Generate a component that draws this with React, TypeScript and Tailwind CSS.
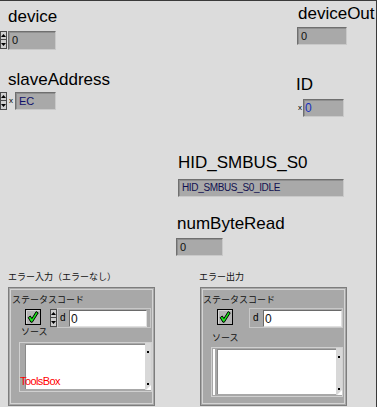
import React from "react";

const LABEL =
  "font-['Liberation_Sans',Arial,sans-serif] text-[17px] leading-[17px] text-black whitespace-nowrap";
const JP =
  "font-['Noto_Sans_CJK_JP','Noto_Sans_CJK_SC',sans-serif] text-[9px] leading-[9px] text-[#111] whitespace-nowrap";
const BOX =
  "h-[18px] bg-[#a9a9a9] border border-t-[#6f6f6f] border-l-[#6f6f6f] border-b-[#c9c9c9] border-r-[#c9c9c9] shadow-[inset_1px_1px_0_#8f8f8f] flex items-center pl-[3px] font-['Liberation_Sans',Arial,sans-serif] text-[11px] leading-none text-[#111] whitespace-nowrap overflow-hidden";

function Spin() {
  return (
    <div className="flex flex-col w-[7px] h-[18px] shrink-0">
      <div className="h-[9px] bg-[#cfcfcf] border border-[#4a4a4a] flex items-center justify-center">
        <svg width="5" height="3" viewBox="0 0 5 3">
          <path d="M2.5 0L5 3H0z" fill="#000" />
        </svg>
      </div>
      <div className="h-[9px] bg-[#cfcfcf] border border-t-0 border-[#4a4a4a] flex items-center justify-center">
        <svg width="5" height="3" viewBox="0 0 5 3">
          <path d="M0 0H5L2.5 3z" fill="#000" />
        </svg>
      </div>
    </div>
  );
}

function Radix() {
  return (
    <div className="flex items-center justify-center font-['Liberation_Sans',Arial,sans-serif] text-[8px] leading-none text-black">
      x
    </div>
  );
}

function Check() {
  return (
    <svg width="16" height="16" viewBox="0 0 16 16" className="shrink-0">
      <rect x="0.5" y="0.5" width="15" height="15" fill="#b5b5b5" stroke="#000" />
      <path d="M1.5 14.5V1.5H14.5" fill="none" stroke="#d6d6d6" />
      <path
        d="M3.2 8.6 L5.3 7 L6.9 9.6 L11.2 2.6 L13.2 3.9 L7.3 13.2 L5.9 13.2 Z"
        fill="#19e619"
        stroke="#000"
        strokeWidth="1"
        strokeLinejoin="round"
      />
    </svg>
  );
}

function Scroll() {
  return (
    <div className="w-[6px] h-full bg-[#d8d8d8] relative flex flex-col items-center">
      <div className="mt-[8px] w-[2px] h-[2px] bg-black" />
      <div className="mt-auto mb-[5px] w-[2px] h-[2px] bg-black" />
      <div className="absolute right-0 bottom-0 w-0 h-0 border-l-[5px] border-l-transparent border-b-[5px] border-b-white" />
    </div>
  );
}

function WhiteNum({ w }: { w: string }) {
  return (
    <div
      className={
        "h-[17px] bg-white border border-t-[#6a6a6a] border-l-[#6a6a6a] border-b-[#e0e0e0] border-r-[#e0e0e0] flex items-center pl-[1px] font-['Liberation_Sans',Arial,sans-serif] text-[12px] leading-none text-[#111] " +
        w
      }
    >
      0
    </div>
  );
}

function ClusterFrame({ children }: { children: React.ReactNode }) {
  return (
    <div className="w-[147px] h-[119px] border border-[#7d7d7d] bg-[#a8a8a8] p-[1px]">
      <div className="h-full border border-t-[#d4d4d4] border-l-[#d4d4d4] border-b-[#d4d4d4] border-r-[#d4d4d4] flex flex-col">
        {children}
      </div>
    </div>
  );
}

function ErrorIn() {
  return (
    <ClusterFrame>
      <div className={JP + " mt-[5px] ml-[1px]"}>ステータスコード</div>
      <div className="flex items-start mt-[4px] h-[20px]">
        <div className="ml-[14px] mt-[1px]">
          <Check />
        </div>
        <div className="ml-[9px] mt-[1px]">
          <Spin />
        </div>
        <div className="w-[94px] h-[20px] border border-[#c8c8c8] flex items-start">
          <div className="ml-[2px] mt-[4px] w-[9px] font-['Liberation_Sans',Arial,sans-serif] text-[10px] leading-none text-black">
            d
          </div>
          <div className="mt-[1px]">
            <WhiteNum w="w-[78px]" />
          </div>
        </div>
      </div>
      <div className={JP + " -mt-[1px] ml-[10px]"}>ソース</div>
      <div className="relative ml-[8px] mt-[6px] w-[133px] h-[50px] border border-[#d0d0d0] flex">
        <div className="w-[5px]" />
        <div className="w-[120px] mt-[1px] h-[45px] bg-white border-t border-l border-[#8a8a8a]" />
        <div className="h-[47px]">
          <Scroll />
        </div>
        <div className="absolute left-[0px] top-[33px] font-['Liberation_Sans',Arial,sans-serif] text-[11px] leading-none tracking-[-0.6px] text-[#ff0000] whitespace-nowrap">
          ToolsBox
        </div>
      </div>
    </ClusterFrame>
  );
}

function ErrorOut() {
  return (
    <ClusterFrame>
      <div className={JP + " mt-[5px] ml-[0px]"}>ステータスコード</div>
      <div className="flex items-start mt-[4px] h-[20px]">
        <div className="ml-[14px] mt-[1px]">
          <Check />
        </div>
        <div className="ml-[16px] w-[94px] h-[20px] border border-[#c8c8c8] flex items-start">
          <div className="ml-[3px] mt-[4px] w-[10px] font-['Liberation_Sans',Arial,sans-serif] text-[10px] leading-none text-black">
            d
          </div>
          <div className="mt-[1px]">
            <WhiteNum w="w-[79px]" />
          </div>
        </div>
      </div>
      <div className={JP + " mt-[5px] ml-[9px]"}>ソース</div>
      <div className="ml-[8px] mt-[5px] w-[132px] h-[50px] border border-[#d0d0d0] flex">
        <div className="w-[5px] flex">
          <div className="ml-[1px] mt-[1px] w-[2px] h-[46px] bg-white" />
        </div>
        <div className="w-[119px] mt-[1px] h-[45px] bg-white border-t border-l border-[#8a8a8a]" />
        <div className="h-[47px]">
          <Scroll />
        </div>
      </div>
    </ClusterFrame>
  );
}

export default function App() {
  return (
    <div className="w-[377px] h-[407px] overflow-hidden bg-[#dcdcdc] border-t border-r border-[#3a3a3a] text-black">
      <div className="flex">
        <div className="w-[296px] shrink-0 flex flex-col items-start">
          <div className={LABEL + " mt-[7px] ml-[8px]"}>device</div>
          <div className="flex mt-[6px]">
            <Spin />
            <div className={BOX + " ml-[1px] w-[48px] !h-[19px]"}>0</div>
          </div>
          <div className={LABEL + " mt-[21px] ml-[8px]"}>slaveAddress</div>
          <div className="flex mt-[4px]">
            <Spin />
            <div className="w-[8px] h-[18px] flex items-center justify-center">
              <Radix />
            </div>
            <div className={BOX + " w-[41px] text-[#10106a]"}>EC</div>
          </div>
        </div>
        <div className="flex flex-col items-start">
          <div className={LABEL + " mt-[4px] ml-[2px]"}>deviceOut</div>
          <div className={BOX + " mt-[5px] ml-[1px] w-[50px]"}>0</div>
          <div className={LABEL + " mt-[31px] ml-[0px]"}>ID</div>
          <div className="flex mt-[6px] ml-[1px]">
            <div className="w-[6px] h-[18px] flex items-center justify-center">
              <Radix />
            </div>
            <div className={BOX + " w-[41px] !pl-[1px] !text-[12px] !text-[#1530c0]"}>0</div>
          </div>
        </div>
      </div>
      <div className="pl-[176px] flex flex-col items-start">
        <div className={LABEL + " mt-[37px] ml-[2px]"}>HID_SMBUS_S0</div>
        <div className={BOX + " mt-[8px] ml-[2px] w-[166px] !text-[10px] tracking-[-0.35px] !text-[#101050]"}>
          HID_SMBUS_S0_IDLE
        </div>
        <div className={LABEL + " mt-[18px] ml-[1px]"}>numByteRead</div>
        <div className={BOX + " mt-[6px] w-[47px]"}>0</div>
      </div>
      <div className="flex mt-[16px]">
        <div className="ml-[8px] flex flex-col">
          <div className={JP}>エラー入力（エラーなし）</div>
          <div className="mt-[6px]">
            <ErrorIn />
          </div>
        </div>
        <div className="ml-[44px] flex flex-col">
          <div className={JP}>エラー出力</div>
          <div className="mt-[6px] ml-[1px]">
            <ErrorOut />
          </div>
        </div>
      </div>
    </div>
  );
}
